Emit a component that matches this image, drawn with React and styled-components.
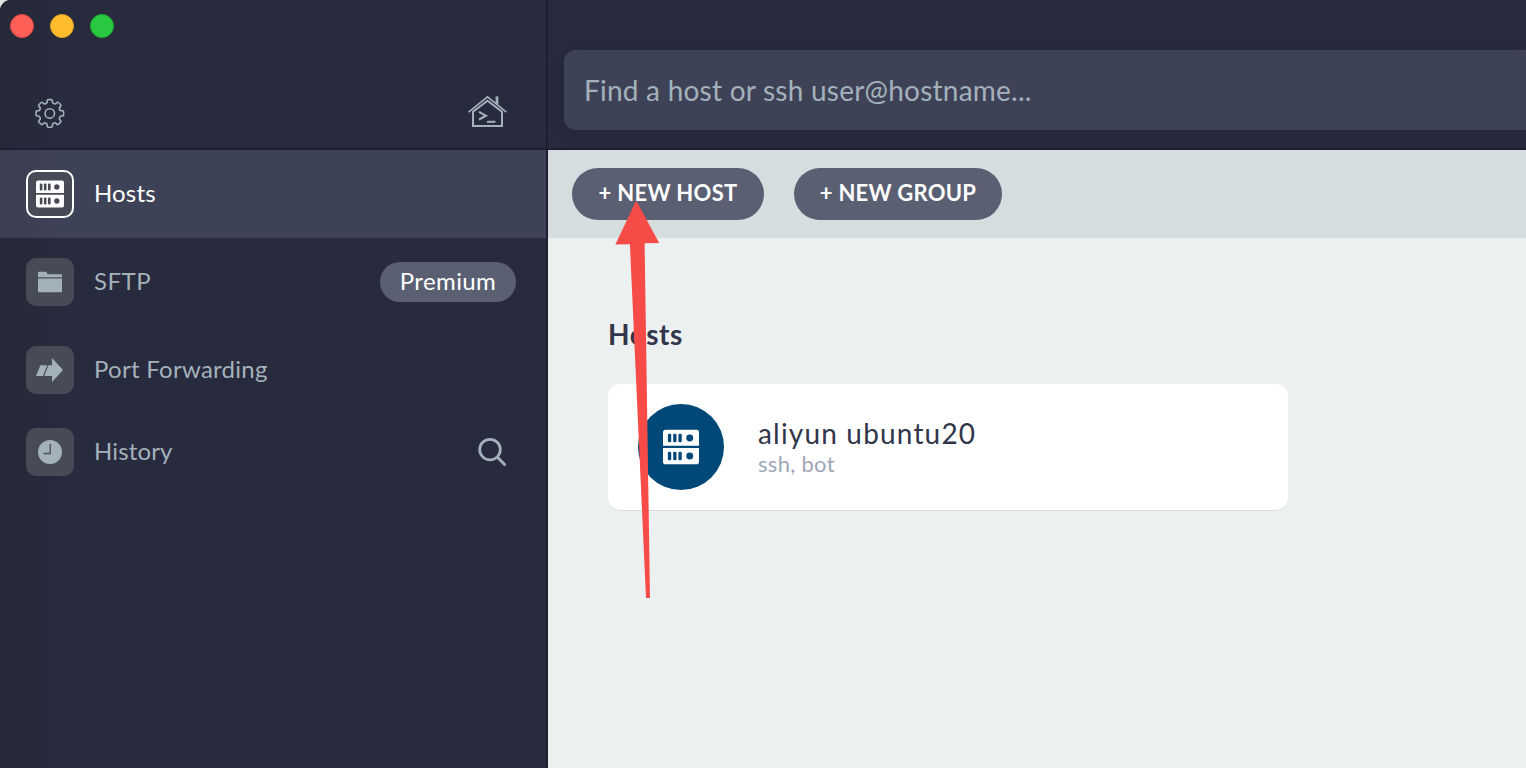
import React from 'react';
import styled, { createGlobalStyle } from 'styled-components';

const c = {
  base: '#282b3d', line: '#1d1e32', raised: '#3e4256', tile: '#474b56', pill: '#5a5f72',
  muted: '#a3b2ba', toolbar: '#d5dddf', content: '#ecf0f1', ink: '#32364a', blue: '#004878',
};

const Global = createGlobalStyle`
  * { box-sizing: border-box; }
  html, body, #root { height: 100%; margin: 0; }
  body { background: #dfe3e2; overflow: hidden; font-family: Lato, sans-serif; }
  svg { display: block; flex: none; overflow: visible; }
  button { font: inherit; border: 0; padding: 0; background: none; color: inherit; }
`;

const Window = styled.div`
  position: relative;
  display: flex;
  width: 1526px;
  height: 768px;
  overflow: hidden;
  background: ${c.base};
  border-top-left-radius: 11px;
`;

const Sidebar = styled.aside`
  display: flex;
  flex-direction: column;
  width: 548px;
  border-right: 2px solid ${c.line};
  background: linear-gradient(90deg, #262938, ${c.base} 60px);
`;

const SideHeader = styled.header`
  display: flex;
  flex-direction: column;
  justify-content: space-between;
  height: 150px;
  padding: 14px 39px 20px 10px;
  border-bottom: 2px solid ${c.line};
`;

const Lights = styled.div`
  display: flex;
  gap: 16px;
`;

const Light = styled.span`
  width: 24px;
  height: 24px;
  border-radius: 50%;
  background: ${(p) => p.$fill};
  border: 1px solid ${(p) => p.$edge};
`;

const Tools = styled.div`
  display: flex;
  align-items: flex-end;
  justify-content: space-between;
  padding-left: 25px;
`;

const NavRow = styled.div`
  display: flex;
  align-items: center;
  height: ${(p) => p.$h || 88}px;
  padding: 0 30px 0 26px;
  color: ${(p) => (p.$active ? '#fff' : c.muted)};
  background: ${(p) => (p.$active ? `linear-gradient(90deg, #3b3e50, ${c.raised} 60px)` : 'none')};
`;

const Tile = styled.span`
  display: grid;
  place-items: center;
  width: 48px;
  height: 48px;
  border-radius: 10px;
  background: ${c.tile};
  border: 2px solid ${(p) => (p.$active ? '#fff' : c.tile)};
`;

const NavText = styled.span`
  flex: 1;
  margin-left: 20px;
  padding-bottom: 2px;
  font-size: 24px;
  line-height: 30px;
  letter-spacing: ${(p) => p.$ls}px;
`;

const Premium = styled.span`
  display: flex;
  align-items: center;
  justify-content: center;
  width: 136px;
  height: 40px;
  padding-bottom: 3px;
  border-radius: 20px;
  color: #fff;
  background: ${c.pill};
  font-size: 24px;
  letter-spacing: 0.4px;
`;

const SearchButton = styled.button`
  margin-right: 10px;
`;

const Main = styled.main`
  flex: 1;
  display: flex;
  flex-direction: column;
  min-width: 0;
`;

const TopBar = styled.header`
  height: 150px;
  padding: 50px 0 0 16px;
  border-bottom: 2px solid ${c.line};
`;

const SearchField = styled.div`
  display: flex;
  align-items: center;
  height: 80px;
  padding: 0 0 0 20px;
  border-radius: 12px 0 0 12px;
  background: ${c.raised};
  color: ${c.muted};
  font-size: 28px;
  letter-spacing: 0.23px;
  box-shadow: 0 4px 14px rgba(29, 30, 50, 0.3);
`;

const Toolbar = styled.div`
  display: flex;
  gap: 30px;
  height: 88px;
  padding: 18px 24px;
  background: ${c.toolbar};
`;

const PillButton = styled.button`
  width: ${(p) => p.$w}px;
  height: 52px;
  padding-bottom: 4px;
  border-radius: 26px;
  color: #fff;
  background: ${c.pill};
  font-size: 22px;
  font-weight: 700;
  letter-spacing: ${(p) => p.$ls}px;
  white-space: nowrap;
`;

const Content = styled.section`
  flex: 1;
  padding: 78px 60px;
  background: ${c.content};
`;

const Heading = styled.h2`
  margin: 0 0 32px;
  color: ${c.ink};
  font-size: 28px;
  line-height: 36px;
  font-weight: 700;
  letter-spacing: 0.5px;
`;

const HostCard = styled.article`
  display: flex;
  align-items: center;
  width: 680px;
  height: 126px;
  padding-left: 30px;
  border-radius: 12px;
  background: #fff;
  box-shadow: 0 1px 0 #d2dcdf;
`;

const Avatar = styled.span`
  display: grid;
  place-items: center;
  width: 86px;
  height: 86px;
  border-radius: 50%;
  background: ${c.blue};
`;

const HostText = styled.div`
  margin: 0 0 0 34px;
  padding-bottom: 2px;
`;

const HostName = styled.div`
  color: ${c.ink};
  font-size: 28px;
  line-height: 34px;
  letter-spacing: 1.18px;
`;

const HostMeta = styled.div`
  color: #9ea6b6;
  font-size: 22px;
  line-height: 27px;
  letter-spacing: 0.3px;
`;

const Pointer = styled.svg`
  position: absolute;
  left: 615px;
  top: 200px;
  pointer-events: none;
`;

function gearPath(teeth, outer, inner, valley) {
  const at = (r, a) => `${(15 + r * Math.sin(a)).toFixed(2)} ${(15 - r * Math.cos(a)).toFixed(2)}`;
  const step = (2 * Math.PI) / teeth;
  let d = '';
  for (let i = 0; i < teeth; i += 1) {
    const a = i * step;
    d += `${i ? 'L' : 'M'}${at(inner, a - 0.24)}L${at(outer - 0.8, a - 0.2)}Q${at(outer, a - 0.18)} ${at(outer, a - 0.11)}`;
    d += `L${at(outer, a + 0.11)}Q${at(outer, a + 0.18)} ${at(outer - 0.8, a + 0.2)}L${at(inner, a + 0.24)}`;
    d += `Q${at(valley, a + step / 2)} ${at(inner, a + step - 0.24)}`;
  }
  return `${d}Z`;
}

const GearIcon = () => (
  <svg width="30" height="30" viewBox="0.2 -0.4 30 30" fill="none" stroke={c.muted} strokeWidth="1.6" strokeLinejoin="round">
    <path d={gearPath(8, 13.9, 11.2, 10)} />
    <circle cx="15" cy="15" r="4.7" />
  </svg>
);

const HomeIcon = () => (
  <svg width="39" height="32" viewBox="0 0 39 32" fill="none" stroke={c.muted} strokeWidth="1.6">
    <path d="M.6 16.2 19.5 .9 38.4 16.2" />
    <path d="M5 15.8V30H34V15.8L19.5 4.8Z" strokeWidth="2" />
    <path d="M29 8V.4" strokeWidth="2.8" />
    <path d="M11 15.9 18 19.7 11 23.5" strokeWidth="2" />
    <path d="M19 25.8H27.4" strokeWidth="2" />
  </svg>
);

const ServerIcon = ({ size, ink }) => (
  <svg width={size} height={size} viewBox="0 0 28 28">
    <path fill="#fff" d="M2 .5H26Q28 .5 28 2.5V13H0V2.5Q0 .5 2 .5ZM0 14.8H28V25.5Q28 27.5 26 27.5H2Q0 27.5 0 25.5Z" />
    <g fill={ink}>
      {[7, 21].map((y) => (
        <g key={y}>
          {[5.1, 9.2, 13.3].map((x) => <rect key={x} x={x - 1.3} y={y - 3.4} width="2.6" height="6.8" rx="1" />)}
          <circle cx="20.8" cy={y} r="2.7" />
        </g>
      ))}
    </g>
  </svg>
);

const FolderIcon = () => (
  <svg width="24" height="22" viewBox="0 0 24 22" fill={c.muted}>
    <path d="M1 .8H8L10 3.2H23Q24 3.2 24 4.2V6.2H0V1.8Q0 .8 1 .8ZM0 7.4H24V20.3Q24 21.3 23 21.3H1Q0 21.3 0 20.3Z" />
  </svg>
);

const ForwardIcon = () => (
  <svg width="28" height="24" viewBox="0 0 28 24" fill={c.muted}>
    <path d="M4.4 7.2H11.2L7 18H0ZM12.4 7.2H16V0L27 12 16 24V18H8.3Z" />
  </svg>
);

const ClockIcon = () => (
  <svg width="24" height="24" viewBox="0 0 24 24">
    <circle cx="12" cy="12" r="12" fill={c.muted} />
    <path d="M12.2 4V13.5H5.5" fill="none" stroke={c.tile} strokeWidth="1.3" />
  </svg>
);

const SearchIcon = () => (
  <svg width="28" height="28" viewBox="0 0 28 28" fill="none" stroke={c.muted} strokeWidth="2.8" strokeLinecap="round">
    <circle cx="12" cy="11.6" r="10.3" />
    <path d="M19.7 19.5 26.6 26.5" />
  </svg>
);

export default function App() {
  return (
    <>
      <Global />
      <Window>
        <Sidebar>
          <SideHeader>
            <Lights>
              <Light $fill="#ff5f57" $edge="#e2483f" />
              <Light $fill="#febc2e" $edge="#dfa023" />
              <Light $fill="#28c840" $edge="#1fac30" />
            </Lights>
            <Tools><GearIcon /><HomeIcon /></Tools>
          </SideHeader>
          <NavRow $active>
            <Tile $active><ServerIcon size={28} ink={c.tile} /></Tile>
            <NavText $ls={0.15}>Hosts</NavText>
          </NavRow>
          <NavRow>
            <Tile><FolderIcon /></Tile>
            <NavText $ls={0.5}>SFTP</NavText>
            <Premium>Premium</Premium>
          </NavRow>
          <NavRow>
            <Tile><ForwardIcon /></Tile>
            <NavText $ls={0.27}>Port Forwarding</NavText>
          </NavRow>
          <NavRow $h={76}>
            <Tile><ClockIcon /></Tile>
            <NavText $ls={0.15}>History</NavText>
            <SearchButton aria-label="Search"><SearchIcon /></SearchButton>
          </NavRow>
        </Sidebar>
        <Main>
          <TopBar><SearchField>Find a host or ssh user@hostname...</SearchField></TopBar>
          <Toolbar>
            <PillButton $w={192} $ls={0.3}>+ NEW HOST</PillButton>
            <PillButton $w={208} $ls={0.25}>+ NEW GROUP</PillButton>
          </Toolbar>
          <Content>
            <Heading>Hosts</Heading>
            <HostCard>
              <Avatar><ServerIcon size={36} ink={c.blue} /></Avatar>
              <HostText>
                <HostName>aliyun ubuntu20</HostName>
                <HostMeta>ssh, bot</HostMeta>
              </HostText>
            </HostCard>
          </Content>
        </Main>
        <Pointer width="45" height="398" viewBox="0 0 45 398">
          <path fill="#f74b47" d="M21.2.5 44.2 43 29.6 43.3 35 398H31L14.9 44.2.4 44.6Z" />
        </Pointer>
      </Window>
    </>
  );
}
